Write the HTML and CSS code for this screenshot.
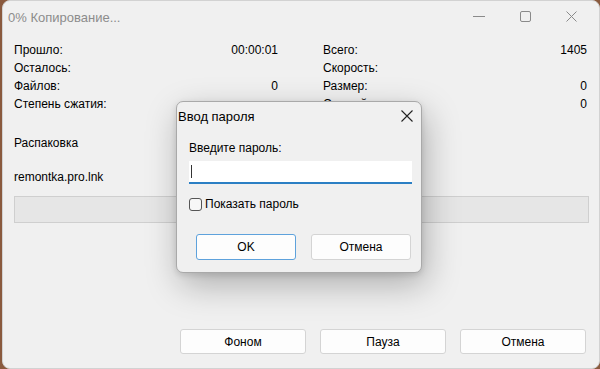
FILE: index.html
```html
<!DOCTYPE html>
<html lang="ru">
<head>
    <meta charset="UTF-8">
    <meta name="viewport" content="width=device-width, initial-scale=1.0">
    <title>0% Копирование...</title>
    <link rel="stylesheet" href="styles.css">
</head>
<body>
    <div class="window">
        <div class="titlebar">
            <span class="title">0% Копирование...</span>
            <div class="controls">
                <svg class="ctl" width="46" height="32" viewBox="0 0 46 32"><path d="M16 15.5h12" stroke="#8a8a8a" stroke-width="1"/></svg>
                <svg class="ctl" width="46" height="32" viewBox="0 0 46 32"><rect x="17.5" y="10.5" width="10" height="10" rx="1.5" fill="none" stroke="#8a8a8a"/></svg>
                <svg class="ctl" width="46" height="32" viewBox="0 0 46 32"><path d="M17.5 10.5l10 10M27.5 10.5l-10 10" stroke="#8a8a8a" stroke-width="1"/></svg>
            </div>
        </div>

        <div class="content">
            <div class="stats">
                <div class="col">
                    <div class="row"><span>Прошло:</span><span>00:00:01</span></div>
                    <div class="row"><span>Осталось:</span><span></span></div>
                    <div class="row"><span>Файлов:</span><span>0</span></div>
                    <div class="row"><span>Степень сжатия:</span><span></span></div>
                </div>
                <div class="col">
                    <div class="row"><span>Всего:</span><span>1405</span></div>
                    <div class="row"><span>Скорость:</span><span></span></div>
                    <div class="row"><span>Размер:</span><span>0</span></div>
                    <div class="row"><span>Сжатый:</span><span>0</span></div>
                </div>
            </div>
            <div class="op">Распаковка</div>
            <div class="file">remontka.pro.lnk</div>
            <div class="progress"></div>
        </div>

        <div class="actions">
            <button class="btn">Фоном</button>
            <button class="btn">Пауза</button>
            <button class="btn">Отмена</button>
        </div>

        <!-- password dialog on top -->
        <div class="dialog">
            <div class="dlg-title">
                <span>Ввод пароля</span>
                <svg width="14" height="14" viewBox="0 0 14 14"><path d="M1.5 1.5l11 11M12.5 1.5l-11 11" stroke="#222" stroke-width="1.1"/></svg>
            </div>
            <div class="dlg-body">
                <label class="dlg-label">Введите пароль:</label>
                <div class="pwd"><span class="caret"></span></div>
                <div class="check">
                    <span class="box"></span>
                    <span>Показать пароль</span>
                </div>
                <div class="dlg-buttons">
                    <button class="btn dlg-btn focus">OK</button>
                    <button class="btn dlg-btn">Отмена</button>
                </div>
            </div>
        </div>
    </div>
</body>
</html>
```

FILE: styles.css
```css
*{
    margin: 0;
    padding: 0;
    box-sizing: border-box;
    font-family: 'Liberation Sans', Arial, sans-serif;
}
body{
    width: 600px;
    height: 369px;
    background: #8a5a3e;
    overflow: hidden;
}
.window{
    position: relative;
    margin-left: 2px;
    width: 598px;
    height: 369px;
    background: #f0f0f0;
    border: 1px solid #d2d2d2;
    border-radius: 8px;
    display: flex;
    flex-direction: column;
    color: #000;
    font-size: 12px;
}
.titlebar{
    height: 33px;
    display: flex;
    align-items: center;
    justify-content: space-between;
}
.titlebar .title{
    padding-left: 5px;
    font-size: 13px;
    color: #8c8c8c;
}
.controls{
    display: flex;
    align-self: flex-start;
    padding-right: 4px;
}
.ctl{
    display: block;
}
.content{
    padding: 7px 10px 0 11px;
}
.stats{
    display: flex;
    gap: 45px;
}
.stats .col{
    width: 264px;
}
.stats .row{
    height: 18px;
    line-height: 18px;
    display: flex;
    justify-content: space-between;
}
.op{
    margin-top: 21px;
    line-height: 18px;
}
.file{
    margin-top: 16px;
    line-height: 18px;
}
.progress{
    margin-top: 10px;
    height: 27px;
    background: #e6e6e6;
    border: 1px solid #cfcfcf;
}
.actions{
    margin-top: auto;
    padding: 0 13px 14px 0;
    display: flex;
    justify-content: flex-end;
    gap: 14px;
}
.btn{
    width: 126px;
    height: 25px;
    background: #fdfdfd;
    border: 1px solid #d4d4d4;
    border-radius: 3px;
    font-size: 12px;
    color: #000;
}

/* ------------------------- dialog ------------------------- */
.dialog{
    position: absolute;
    left: 173px;
    top: 100px;
    width: 246px;
    height: 172px;
    background: #f0f0f0;
    border: 1px solid #a9a9a9;
    border-radius: 7px;
    box-shadow: 4px 12px 34px rgba(0,0,0,0.28), 0 2px 6px rgba(0,0,0,0.12);
}
.dlg-title{
    height: 28px;
    padding: 0 7px 0 1px;
    display: flex;
    align-items: center;
    justify-content: space-between;
    font-size: 13px;
}
.dlg-body{
    padding: 10px 9px 0 12px;
}
.dlg-label{
    display: block;
    line-height: 16px;
}
.pwd{
    margin-top: 5px;
    height: 23px;
    background: #fff;
    border-bottom: 2px solid #2b7fc4;
    padding: 4px 2px;
}
.caret{
    display: block;
    width: 1px;
    height: 13px;
    background: #333;
}
.check{
    margin-top: 13px;
    display: flex;
    align-items: center;
    gap: 3px;
    height: 14px;
}
.check .box{
    width: 13px;
    height: 13px;
    border: 1px solid #555;
    border-radius: 3px;
    background: #f7f7f7;
}
.dlg-buttons{
    margin-top: 23px;
    padding-left: 7px;
    display: flex;
    gap: 15px;
}
.dlg-btn{
    width: 100px;
    height: 26px;
}
.dlg-btn.focus{
    border-color: #5ea2dc;
}
```
